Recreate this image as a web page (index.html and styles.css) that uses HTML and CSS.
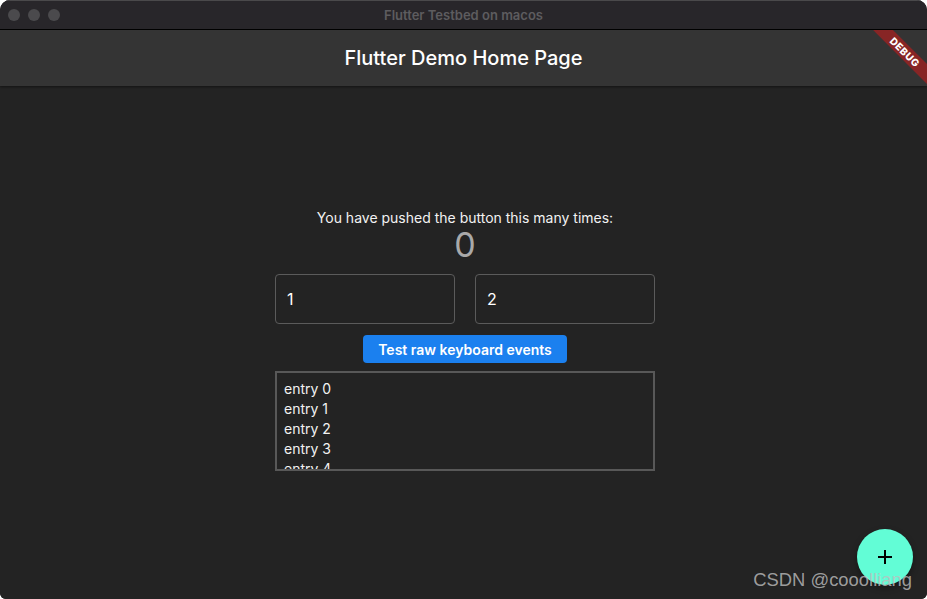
FILE: index.html
```html
<!DOCTYPE html>
<html>
<head>
<meta charset="utf-8">
<link rel="stylesheet" href="styles.css">
</head>
<body>
<div class="window">
  <div class="titlebar">
    <div class="lights"><span class="light"></span><span class="light"></span><span class="light"></span></div>
    <div class="wintitle">Flutter Testbed on macos</div>
  </div>
  <div class="app">
    <header class="appbar">Flutter Demo Home Page</header>
    <main class="content">
      <div class="label">You have pushed the button this many times:</div>
      <div class="counter">0</div>
      <div class="fields">
        <div class="field">1</div>
        <div class="field">2</div>
      </div>
      <button class="btn">Test raw keyboard events</button>
      <div class="log">
        <div class="entry">entry 0</div>
        <div class="entry">entry 1</div>
        <div class="entry">entry 2</div>
        <div class="entry">entry 3</div>
        <div class="entry">entry 4</div>
      </div>
    </main>
    <div class="banner">DEBUG</div>
    <div class="fab">
      <svg width="24" height="24" viewBox="0 0 24 24"><path d="M19 13h-6v6h-2v-6H5v-2h6V5h2v6h6v2z" fill="#000"/></svg>
    </div>
    <div class="watermark">CSDN @cooolliang</div>
  </div>
</div>
</body>
</html>
```

FILE: styles.css
```css
html, body {
  margin: 0;
  padding: 0;
  background: #ffffff;
}
body {
  width: 927px;
  height: 599px;
  overflow: hidden;
  font-family: Inter, "Noto Sans", sans-serif;
}
.window {
  width: 927px;
  height: 599px;
  display: flex;
  flex-direction: column;
  border-radius: 10px 10px 6px 6px;
  overflow: hidden;
  background: #232323;
}
.titlebar {
  flex: none;
  background: #28262a;
  border-top: 1px solid #4a494b;
  box-sizing: border-box;
  border-bottom: 1px solid #000;
  height: 30px;
  display: flex;
  align-items: center;
  position: relative;
}
.lights {
  display: flex;
  gap: 8px;
  padding-left: 8px;
}
.light {
  width: 12px;
  height: 12px;
  border-radius: 50%;
  background: #4b4a4d;
}
.wintitle {
  position: absolute;
  left: 0;
  right: 0;
  top: 6px;
  text-align: center;
  font-size: 13px;
  font-weight: 600;
  color: #5d5c5f;
  line-height: 16px;
}
.app {
  flex: 1;
  position: relative;
  overflow: hidden;
  display: flex;
  flex-direction: column;
}
.appbar {
  height: 56px;
  flex: none;
  background: #343434;
  color: #ffffff;
  font-size: 20px;
  font-weight: 500;
  display: flex;
  align-items: center;
  justify-content: center;
  box-shadow: 0 1px 2px rgba(0,0,0,0.45);
  position: relative;
  z-index: 1;
}
.content {
  flex: 1;
  background: #232323;
  display: flex;
  flex-direction: column;
  align-items: center;
  padding-top: 123px;
  padding-left: 3px;
  color: #ffffff;
}
.label {
  font-size: 14px;
  line-height: 17px;
  color: #f2f2f2;
}
.counter {
  margin-top: -1px;
  font-size: 34px;
  line-height: 40px;
  font-weight: 400;
  color: #a9a9a9;
}
.fields {
  margin-top: 9px;
  display: flex;
  gap: 20px;
}
.field {
  width: 180px;
  height: 50px;
  box-sizing: border-box;
  border: 1px solid #5b5b5b;
  border-radius: 4px;
  padding-left: 11px;
  display: flex;
  align-items: center;
  font-size: 16px;
  color: #ffffff;
}
.btn {
  margin-top: 11px;
  height: 28px;
  width: 204px;
  border: none;
  border-radius: 4px;
  background: #1b80ef;
  color: #ffffff;
  font-family: Inter, "Noto Sans", sans-serif;
  font-size: 14px;
  font-weight: 600;
  padding: 0;
}
.log {
  margin-top: 8px;
  width: 380px;
  height: 100px;
  box-sizing: border-box;
  border: 2px solid #585858;
  padding: 6px 7px 0;
  overflow: hidden;
}
.entry {
  font-size: 14px;
  line-height: 20px;
  color: #f2f2f2;
}
.banner {
  position: absolute;
  top: 15px;
  right: -28px;
  width: 100px;
  height: 14px;
  background: rgba(183, 28, 28, 0.63);
  color: #ffffff;
  font-size: 10px;
  font-weight: 800;
  line-height: 14px;
  text-align: center;
  letter-spacing: 0.5px;
  transform: rotate(45deg);
  z-index: 2;
}
.fab {
  position: absolute;
  right: 14px;
  bottom: 14px;
  width: 56px;
  height: 56px;
  border-radius: 50%;
  background: #62fdd6;
  display: flex;
  align-items: center;
  justify-content: center;
  box-shadow: 0 3px 6px rgba(0,0,0,0.35);
  z-index: 2;
}
.watermark {
  position: absolute;
  right: 15px;
  bottom: 9px;
  font-family: "Liberation Sans", Arial, sans-serif;
  font-size: 18.4px;
  line-height: 20px;
  color: rgba(190, 190, 190, 0.8);
  z-index: 3;
}
```
